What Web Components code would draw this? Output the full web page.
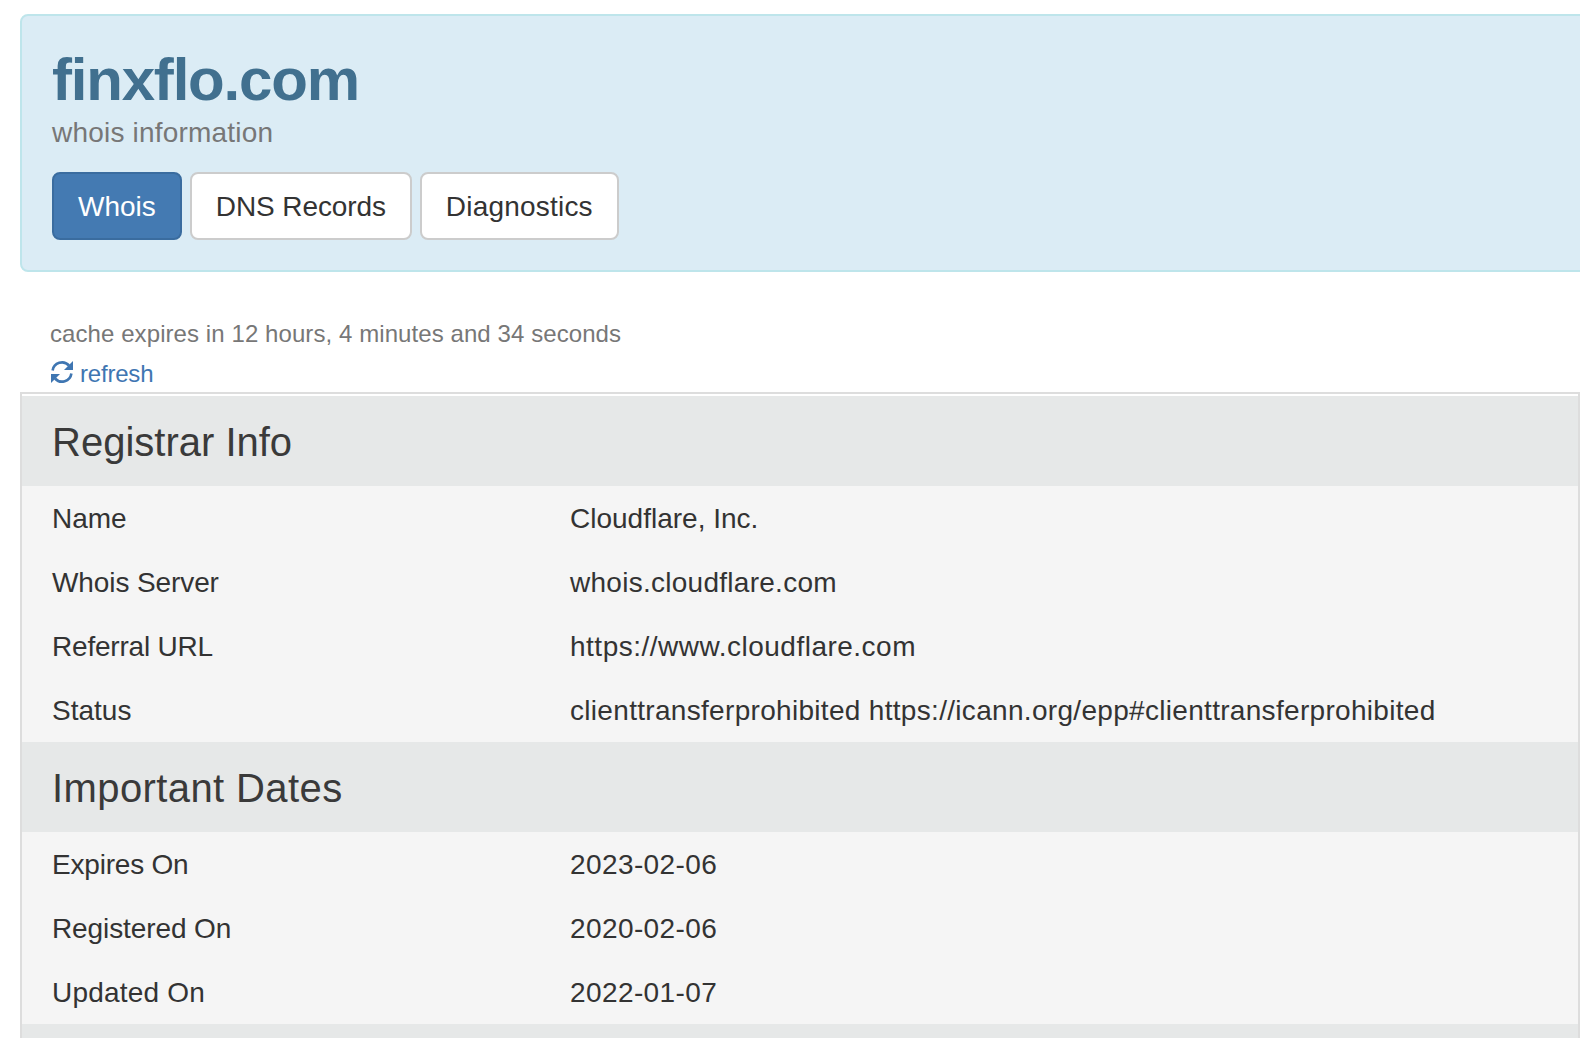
<!DOCTYPE html>
<html lang="en">
<head>
<meta charset="utf-8">
<title>finxflo.com whois information</title>
<style>
  html, body { margin: 0; height: 100%; overflow: hidden; background: #fff; }
  body {
    padding: 14px 0 0 20px;
    box-sizing: border-box;
    font-family: "Liberation Sans", Arial, sans-serif;
    font-size: 28px;
    line-height: 40px;
    color: #333;
  }
</style>
</head>
<body>
<whois-header domain="finxflo.com" subtitle="whois information">
  <nav-pill active>Whois</nav-pill>
  <nav-pill style="letter-spacing: -0.1px">DNS Records</nav-pill>
  <nav-pill style="letter-spacing: 0.2px">Diagnostics</nav-pill>
</whois-header>

<cache-note>cache expires in 12 hours, 4 minutes and 34 seconds</cache-note>

<info-table>
  <info-section title="Registrar Info">
    <info-row label="Name">Cloudflare, Inc.</info-row>
    <info-row label="Whois Server" label-track="-0.1px" track="0.27px">whois.cloudflare.com</info-row>
    <info-row label="Referral URL" label-track="-0.2px" track="0.5px">https://www.cloudflare.com</info-row>
    <info-row label="Status" track="0.31px">clienttransferprohibited https://icann.org/epp#clienttransferprohibited</info-row>
  </info-section>
  <info-section title="Important Dates" style="letter-spacing: 0.4px">
    <info-row label="Expires On" label-track="-0.2px" track="0.4px">2023-02-06</info-row>
    <info-row label="Registered On" label-track="-0.1px" track="0.4px">2020-02-06</info-row>
    <info-row label="Updated On" label-track="0.2px" track="0.4px">2022-01-07</info-row>
  </info-section>
  <info-section></info-section>
</info-table>

<script>
  class WhoisHeader extends HTMLElement {
    constructor() {
      super();
      this.attachShadow({ mode: 'open' });
      this.shadowRoot.innerHTML = `
        <style>
          :host {
            display: block;
            box-sizing: border-box;
            width: 1600px;
            height: 258px;
            padding: 30px 30px 0;
            background: #dbecf5;
            border: 2px solid #bee5eb;
            border-radius: 8px;
          }
          h1 {
            margin: 0;
            font-size: 60px;
            line-height: 68px;
            font-weight: 700;
            letter-spacing: -1.2px;
            color: #41708f;
          }
          p {
            margin: 0 0 20px;
            font-size: 28px;
            line-height: 38px;
            letter-spacing: 0.2px;
            color: #777;
          }
          .pills {
            display: flex;
            gap: 8px;
          }
        </style>
        <h1></h1>
        <p></p>
        <div class="pills"><slot></slot></div>
      `;
    }

    connectedCallback() {
      this.shadowRoot.querySelector('h1').textContent = this.getAttribute('domain');
      this.shadowRoot.querySelector('p').textContent = this.getAttribute('subtitle');
    }
  }

  class NavPill extends HTMLElement {
    constructor() {
      super();
      this.attachShadow({ mode: 'open' });
      this.shadowRoot.innerHTML = `
        <style>
          :host {
            display: block;
            box-sizing: border-box;
            height: 68px;
            padding: 13px 24px 11px;
            font-size: 28px;
            line-height: 40px;
            color: #333;
            background: #fff;
            border: 2px solid #ccc;
            border-radius: 8px;
          }
          :host([active]) {
            color: #fff;
            background: #447ab2;
            border-color: #3a6c9f;
          }
        </style>
        <slot></slot>
      `;
    }
  }

  class CacheNote extends HTMLElement {
    constructor() {
      super();
      this.attachShadow({ mode: 'open' });
      this.shadowRoot.innerHTML = `
        <style>
          :host {
            display: block;
            height: 120px;
            padding-left: 30px;
            box-sizing: border-box;
            padding-top: 42px;
            font-size: 24px;
            line-height: 40px;
            letter-spacing: 0.08px;
            color: #777;
          }
          a {
            display: flex;
            align-items: center;
            gap: 6px;
            letter-spacing: -0.2px;
            color: #3f76b2;
            text-decoration: none;
          }
          svg {
            width: 24px;
            height: 24px;
            margin-top: -4px;
          }
          .arc { fill: none; stroke: currentColor; stroke-width: 2.6; }
          .head { fill: currentColor; }
        </style>
        <div><slot></slot></div>
        <a href="#">
          <svg viewBox="0 0 24 24">
            <path class="arc" d="M2.6 10.5A9.5 9.5 0 0 1 19 5.5"/>
            <path class="head" d="M23 1v9h-9z"/>
            <path class="arc" d="M21.4 13.5A9.5 9.5 0 0 1 5 18.5"/>
            <path class="head" d="M1 23v-9h9z"/>
          </svg>
          refresh
        </a>
      `;
    }
  }

  class InfoTable extends HTMLElement {
    constructor() {
      super();
      this.attachShadow({ mode: 'open' });
      this.shadowRoot.innerHTML = `
        <style>
          :host {
            display: block;
            box-sizing: border-box;
            padding-top: 2px;
            border: 2px solid #ddd;
            border-bottom: 0;
          }
        </style>
        <slot></slot>
      `;
    }
  }

  class InfoSection extends HTMLElement {
    constructor() {
      super();
      this.attachShadow({ mode: 'open' });
      this.shadowRoot.innerHTML = `
        <style>
          :host { display: block; }
          h3 {
            box-sizing: border-box;
            height: 90px;
            margin: 0;
            padding: 2px 30px 0;
            font-size: 40px;
            line-height: 88px;
            font-weight: 400;
            color: #3a3a3a;
            background: #e6e8e8;
          }
          div { background: #f5f5f5; letter-spacing: 0; }
        </style>
        <h3></h3>
        <div><slot></slot></div>
      `;
    }

    connectedCallback() {
      this.shadowRoot.querySelector('h3').textContent = this.getAttribute('title') || '';
    }
  }

  class InfoRow extends HTMLElement {
    constructor() {
      super();
      this.attachShadow({ mode: 'open' });
      this.shadowRoot.innerHTML = `
        <style>
          :host {
            display: grid;
            grid-template-columns: 518px 1fr;
            padding: 13px 30px 11px;
            font-size: 28px;
            line-height: 40px;
            color: #333;
          }
        </style>
        <span class="label"></span>
        <span class="value"><slot></slot></span>
      `;
    }

    connectedCallback() {
      const label = this.shadowRoot.querySelector('.label');
      label.textContent = this.getAttribute('label');
      label.style.letterSpacing = this.getAttribute('label-track') || '';
      this.shadowRoot.querySelector('.value').style.letterSpacing = this.getAttribute('track') || '';
    }
  }

  customElements.define('whois-header', WhoisHeader);
  customElements.define('nav-pill', NavPill);
  customElements.define('cache-note', CacheNote);
  customElements.define('info-table', InfoTable);
  customElements.define('info-section', InfoSection);
  customElements.define('info-row', InfoRow);
</script>
</body>
</html>
